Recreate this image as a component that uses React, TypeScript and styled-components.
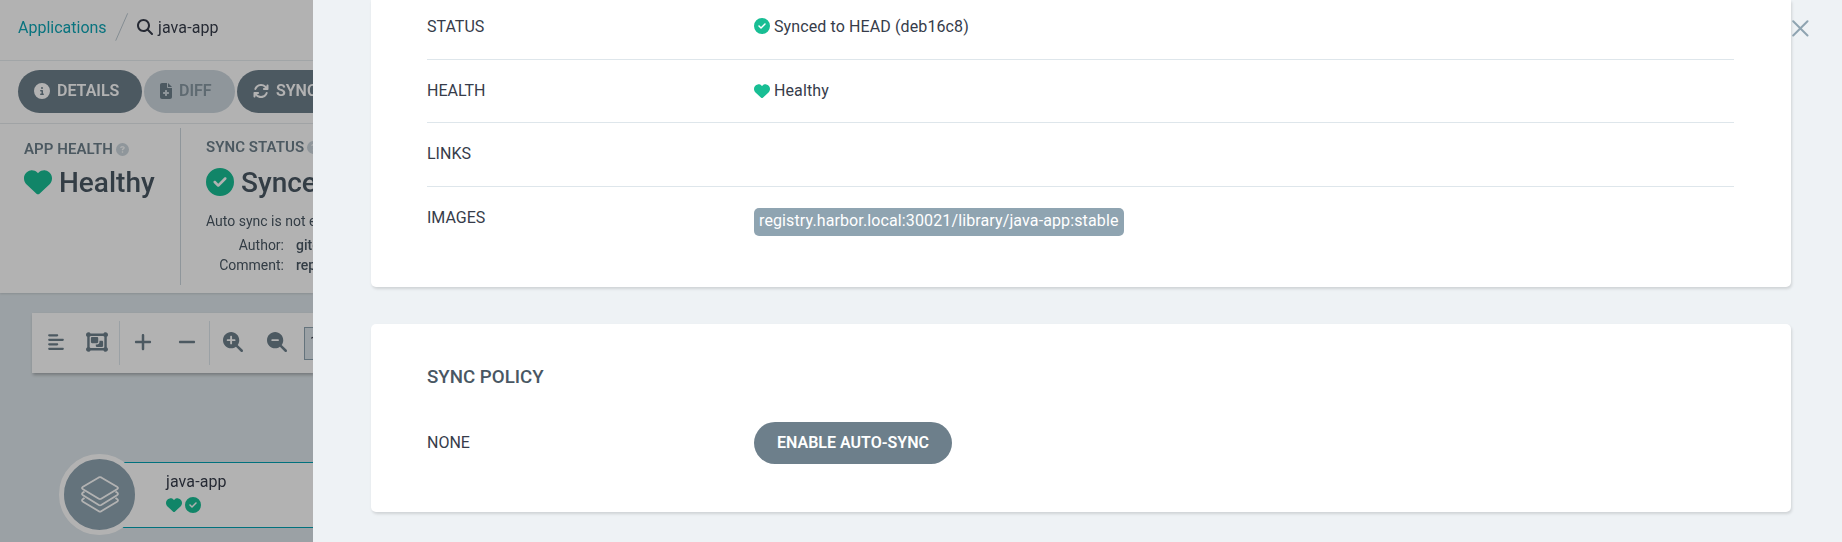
import React from 'react';
import styled, { createGlobalStyle } from 'styled-components';
import {
  FaAlignLeft, FaArrowsRotate, FaCircleCheck, FaCircleInfo, FaCircleQuestion, FaFileMedical,
  FaHeart, FaMagnifyingGlass, FaMagnifyingGlassMinus, FaMagnifyingGlassPlus, FaMinus,
  FaObjectGroup, FaPlus,
} from 'react-icons/fa6';

const GlobalStyle = createGlobalStyle`
  *, *::before, *::after { box-sizing: border-box; }
  body { margin: 0; overflow: hidden; font-family: Roboto, "Liberation Sans", sans-serif; color: #363c4a; }
  svg { display: block; flex: none; }
`;

const Page = styled.div`
  display: flex;
  width: 1842px;
  height: 542px;
  overflow: hidden;
`;

const AppView = styled.div`
  display: flex;
  flex-direction: column;
  width: 313px;
  flex: none;
  overflow: hidden;
  background: #dee6eb;
  filter: brightness(0.7);
  white-space: nowrap;
`;

const TopBar = styled.header`
  display: flex;
  align-items: center;
  height: 61px;
  padding: 0 0 6px 18px;
  background: #fff;
  border-bottom: 1px solid #e6ebee;
  font-size: 16px;
`;

const CrumbLink = styled.a`
  color: #0fa5b5;
  width: 97px;
`;

const Slash = styled.svg`
  margin-right: 8px;
`;

const Crumb = styled.span`
  display: flex;
  align-items: center;
  gap: 5px;
  color: #363c4a;
  letter-spacing: 0.1px;
`;

const ActionBar = styled.div`
  display: flex;
  gap: 2px;
  height: 63px;
  padding: 9px 0 0 18px;
  background: #fff;
  border-bottom: 1px solid #e6ebee;
`;

const Button = styled.button<{ $disabled?: boolean; $width: number; $height?: number; $center?: boolean }>`
  display: flex;
  flex: none;
  align-items: center;
  justify-content: ${p => (p.$center ? 'center' : 'flex-start')};
  gap: 7px;
  width: ${p => p.$width}px;
  height: ${p => p.$height ?? 43}px;
  padding: 0 ${p => (p.$center ? 0 : 16)}px 2px;
  border: 0;
  border-radius: 22px;
  background: ${p => (p.$disabled ? '#ccd6dd' : '#6d7f8b')};
  color: ${p => (p.$disabled ? '#8797a2' : '#fff')};
  font: 600 16px Roboto, sans-serif;
  svg { color: ${p => (p.$disabled ? '#6d7f8b' : '#fff')}; }
`;

const DiffIcon = styled(FaFileMedical)`
  width: 12px;
  height: 16px;
`;

const StatusBar = styled.section`
  display: flex;
  flex: none;
  height: 169px;
  padding-top: 4px;
  background: #fff;
  box-shadow: 0 1px 2px rgba(0, 0, 0, 0.12);
`;

const StatusItem = styled.div<{ $top: number; $left: number; $width: number }>`
  flex: none;
  width: ${p => p.$width}px;
  height: 157px;
  padding: ${p => p.$top}px 0 0 ${p => p.$left}px;
  border-right: 1px solid #ccd6dd;
`;

const StatusLabel = styled.div`
  display: flex;
  align-items: center;
  gap: 3px;
  height: 18px;
  color: #6d7f8b;
  font-size: 15px;
  font-weight: 600;
  letter-spacing: 0.06px;
  svg { color: #ccd6dd; }
`;

const StatusValue = styled.div<{ $top: number }>`
  display: flex;
  align-items: center;
  gap: 7px;
  height: 34px;
  margin-top: ${p => p.$top}px;
  color: #495763;
  font-size: 28px;
  font-weight: 500;
  svg { color: #18be94; }
`;

const Note = styled.div`
  margin-top: 12px;
  font-size: 14px;
  line-height: 20px;
  color: #495763;
`;

const Meta = styled.dl`
  display: grid;
  grid-template-columns: 78px 100px;
  column-gap: 12px;
  margin: 4px 0 0;
  font-size: 14px;
  line-height: 20px;
  color: #495763;
  dt { text-align: right; }
  dd { margin: 0; font-weight: 500; }
`;

const Canvas = styled.main`
  flex: 1;
  padding-top: 20px;
`;

const Tools = styled.div`
  display: flex;
  align-items: center;
  height: 60px;
  margin-left: 32px;
  background: #fff;
  box-shadow: 1px 2px 3px rgba(0, 0, 0, 0.25);
  color: #6d7f8b;
`;

const ToolGroup = styled.div<{ $width: number; $pad: number; $gap: number; $last?: boolean }>`
  display: flex;
  flex: none;
  align-items: center;
  gap: ${p => p.$gap}px;
  width: ${p => p.$width}px;
  height: 44px;
  padding: 0 0 3px ${p => p.$pad}px;
  border-right: ${p => (p.$last ? 0 : 1)}px solid #dee6eb;
`;

const ZoomField = styled.div`
  flex: none;
  width: 60px;
  height: 33px;
  margin: 0 0 0 -4px;
  padding: 7px 5px;
  border: 1px solid #8fa4b1;
  background: #dee6eb;
  font-size: 14px;
  line-height: 15px;
  color: #363c4a;
`;

const Node = styled.div`
  display: flex;
  align-items: center;
  height: 81px;
  margin: 81px 0 0 59px;
`;

const NodeKind = styled.div`
  display: flex;
  flex: none;
  z-index: 1;
  align-items: center;
  justify-content: center;
  width: 81px;
  height: 81px;
  border: 5px solid #fff;
  border-radius: 50%;
  background: #8fa4b1;
`;

const NodeBody = styled.div`
  flex: none;
  width: 300px;
  height: 66px;
  margin-left: -40px;
  padding: 9px 0 0 65px;
  border: 1px solid #00a2b3;
  background: #fff;
  font-size: 16px;
  line-height: 20px;
  letter-spacing: 0.1px;
`;

const NodeState = styled.div`
  display: flex;
  align-items: center;
  gap: 3px;
  height: 16px;
  margin-top: 5px;
  color: #18be94;
`;

const Panel = styled.aside`
  display: flex;
  flex: 1;
  align-items: flex-start;
  background: #eef2f5;
`;

const Cards = styled.div`
  display: flex;
  flex-direction: column;
  gap: 37px;
  width: 1420px;
  margin-left: 58px;
`;

const Card = styled.section<{ $open?: boolean; $height: number }>`
  height: ${p => p.$height}px;
  padding: 0 57px 0 56px;
  border-radius: ${p => (p.$open ? '0 0 5px 5px' : '5px')};
  background: #fff;
  box-shadow: 1px 2px 3px rgba(0, 0, 0, 0.13);
`;

const Row = styled.div<{ $height: number; $last?: boolean; $shift?: number }>`
  display: grid;
  grid-template-columns: 327px 1fr;
  align-items: center;
  height: ${p => p.$height}px;
  padding-bottom: ${p => p.$shift ?? 0}px;
  border-bottom: ${p => (p.$last ? 0 : 1)}px solid #dee6eb;
  font-size: 16px;
`;

const Label = styled.span<{ $raise?: number }>`
  padding-bottom: ${p => p.$raise ?? 0}px;
`;

const Value = styled.div`
  display: flex;
  align-items: center;
  gap: 4px;
  letter-spacing: 0.11px;
  svg { color: #18be94; }
`;

const Tag = styled.span`
  height: 28px;
  margin-top: 10px;
  padding: 0 5px;
  border-radius: 5px;
  background: #8fa4b1;
  color: #fff;
  letter-spacing: 0.12px;
  line-height: 25px;
`;

const CardTitle = styled.h2`
  margin: 0;
  padding-top: 41px;
  color: #495763;
  font-size: 18.7px;
  font-weight: 500;
  line-height: 24px;
`;

const Close = styled.svg`
  margin: 20px 0 0 1px;
`;

const LayersIcon = () => (
  <svg width="38" height="37" viewBox="0 0 38 37" fill="none" stroke="#fff" strokeWidth="1.8" strokeLinejoin="round">
    <path d="M17.8 1.4 Q19 .8 20.2 1.4L36 10.8Q38 12 36 13.2L20.2 22.8Q19 23.5 17.8 22.8L2 13.2Q0 12 2 10.8Z" />
    <path d="M3.5 15.5 2 16.6Q0 18 2 19.2L17.8 29Q19 29.7 20.2 29L36 19.2Q38 18 36 16.6L34.5 15.5" />
    <path d="M3.5 22 2 23.1Q0 24.5 2 25.7L17.8 35.2Q19 36 20.2 35.2L36 25.7Q38 24.5 36 23.1L34.5 22" />
  </svg>
);

export default function App() {
  return (
    <Page>
      <GlobalStyle />
      <AppView>
        <TopBar>
          <CrumbLink>Applications</CrumbLink>
          <Slash width="14" height="28" viewBox="0 0 14 28" stroke="#bcc8d0" strokeWidth="1">
            <path d="M.7 27.7 12.7.3" />
          </Slash>
          <Crumb><FaMagnifyingGlass size={16} />java-app</Crumb>
        </TopBar>
        <ActionBar>
          <Button $width={124}><FaCircleInfo size={16} />DETAILS</Button>
          <Button $width={91} $disabled><DiffIcon />DIFF</Button>
          <Button $width={110}><FaArrowsRotate size={16} />SYNC</Button>
        </ActionBar>
        <StatusBar>
          <StatusItem $width={181} $top={12} $left={24}>
            <StatusLabel>APP HEALTH<FaCircleQuestion size={13} /></StatusLabel>
            <StatusValue $top={7}><FaHeart size={28} />Healthy</StatusValue>
          </StatusItem>
          <StatusItem $width={300} $top={10} $left={25}>
            <StatusLabel>SYNC STATUS<FaCircleQuestion size={13} /></StatusLabel>
            <StatusValue $top={9}><FaCircleCheck size={28} />Synced</StatusValue>
            <Note>Auto sync is not enabled.</Note>
            <Meta>
              <dt>Author:</dt><dd>gitea</dd>
              <dt>Comment:</dt><dd>replicas</dd>
            </Meta>
          </StatusItem>
        </StatusBar>
        <Canvas>
          <Tools>
            <ToolGroup $width={88} $pad={15} $gap={21}><FaAlignLeft size={18} /><FaObjectGroup size={22} /></ToolGroup>
            <ToolGroup $width={90} $pad={13} $gap={24}><FaPlus size={20} /><FaMinus size={20} /></ToolGroup>
            <ToolGroup $width={98} $pad={13} $gap={24} $last><FaMagnifyingGlassPlus size={20} /><FaMagnifyingGlassMinus size={20} /></ToolGroup>
            <ZoomField>100%</ZoomField>
          </Tools>
          <Node>
            <NodeKind><LayersIcon /></NodeKind>
            <NodeBody>
              java-app
              <NodeState><FaHeart size={16} /><FaCircleCheck size={16} /></NodeState>
            </NodeBody>
          </Node>
        </Canvas>
      </AppView>
      <Panel>
        <Cards>
          <Card $open $height={287}>
            <Row $height={60} $shift={7}><Label>STATUS</Label><Value><FaCircleCheck size={16} />Synced to HEAD (deb16c8)</Value></Row>
            <Row $height={63} $shift={1}><Label>HEALTH</Label><Value><FaHeart size={16} />Healthy</Value></Row>
            <Row $height={64} $shift={3}><Label>LINKS</Label></Row>
            <Row $height={63} $shift={3} $last><Label>IMAGES</Label><Value><Tag>registry.harbor.local:30021/library/java-app:stable</Tag></Value></Row>
          </Card>
          <Card $height={188}>
            <CardTitle>SYNC POLICY</CardTitle>
            <Row $height={108} $last><Label $raise={2}>NONE</Label><Button $width={198} $height={42} $center>ENABLE AUTO-SYNC</Button></Row>
          </Card>
        </Cards>
        <Close width="17" height="17" viewBox="0 0 17 17" stroke="#8fa4b1" strokeWidth="2" strokeLinecap="round">
          <path d="M1.2 1.2 15.5 15.5M15.5 1.2 1.2 15.5" />
        </Close>
      </Panel>
    </Page>
  );
}
